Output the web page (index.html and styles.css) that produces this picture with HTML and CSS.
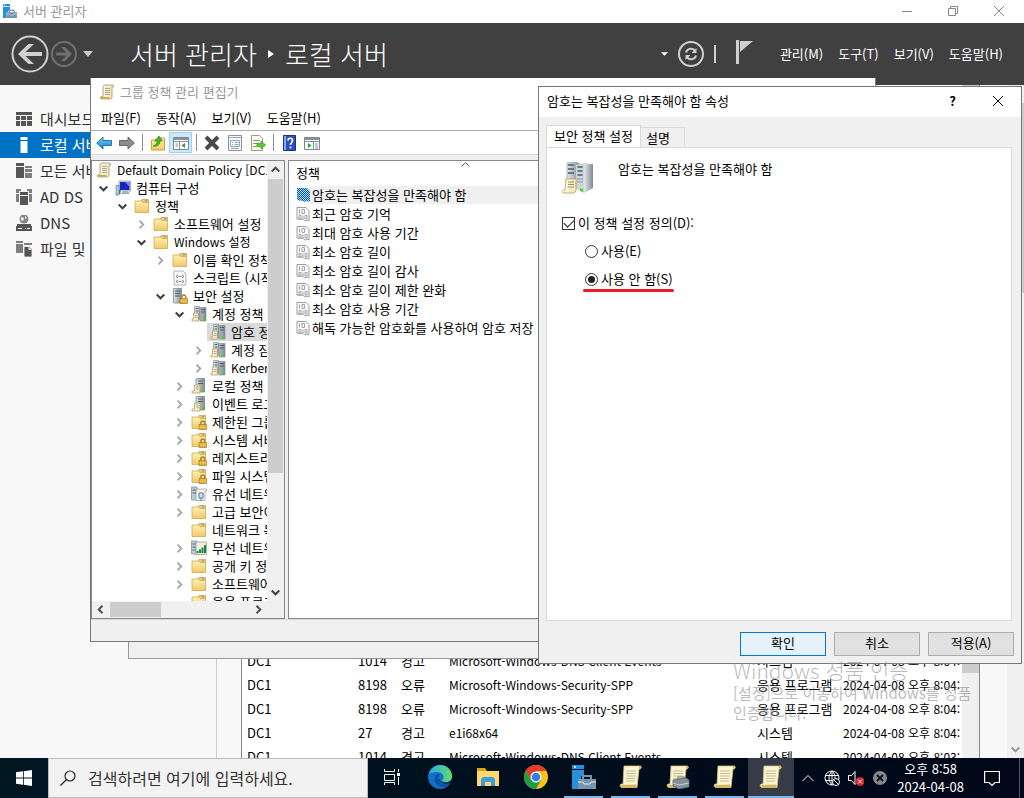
FILE: index.html
```html
<!DOCTYPE html>
<html lang="ko">
  <head>
    <meta charset="UTF-8" />
    <meta name="viewport" content="width=device-width, initial-scale=1.0" />
    <title>서버 관리자</title>
    <link rel="stylesheet" href="styles.css">
  </head>
  <body>
    <!-- shared icons -->
    <svg class="sprite" aria-hidden="true">
      <defs>
        <linearGradient id="paper" x1="0" x2="1">
          <stop offset="0" stop-color="#fffbe6" />
          <stop offset="1" stop-color="#efe0b0" />
        </linearGradient>
        <linearGradient id="metal" x1="0" x2="1">
          <stop offset="0" stop-color="#e2e8ec" />
          <stop offset="1" stop-color="#7f8b93" />
        </linearGradient>
        <linearGradient id="gold" x1="0" x2="0" y1="0" y2="1">
          <stop offset="0" stop-color="#fff0b4" />
          <stop offset="1" stop-color="#f0c968" />
        </linearGradient>
        <linearGradient id="sky" x1="0" x2="0" y1="0" y2="1">
          <stop offset="0" stop-color="#7fd0f7" />
          <stop offset="1" stop-color="#1480c8" />
        </linearGradient>
        <linearGradient id="edge-top" x1="0" x2="1">
          <stop offset="0" stop-color="#2aa7e8" />
          <stop offset="1" stop-color="#62dc6a" />
        </linearGradient>
        <pattern id="dither" width="2" height="2" patternUnits="userSpaceOnUse">
          <rect width="2" height="2" fill="#b5cfe4" />
          <rect width="1" height="1" fill="#005fa8" />
          <rect x="1" y="1" width="1" height="1" fill="#005fa8" />
        </pattern>
      </defs>
      <symbol id="i-manager" viewBox="0 0 24 24">
        <path fill="#2590dc" d="M0 0h12v4H0zM0 5h12v6H9v3H6v10H0z" />
        <path fill="#fff" opacity=".7" d="M2 1h2v2H2z" />
        <path fill="none" stroke="#7396ad" stroke-width="2" d="M11 14v-3h8v3" />
        <path fill="#7396ad" d="M6 14h18v10H6z" />
        <path fill="none" stroke="#dbe8f0" d="M6 17h5l1 2h6l1-2h5" />
      </symbol>
      <symbol id="i-scroll" viewBox="0 0 16 16">
        <path fill="url(#paper)" stroke="#a39a75" stroke-width=".8" d="M5 1h9c1.400 1 1 2.500-1 2.200V13c0 1.600-1 2-2 2H2c-1.500-.5-1-2.500.5-2.500H4V3c0-1 .2-1.600 1-2z" />
        <path fill="none" stroke="#9c977d" stroke-width=".8" d="M6 4.500h5M6 6.500h5M6 8.500h5M6 10.500h5" />
        <path fill="#c9a94f" d="M2 13h8l1 1.800H2z" />
      </symbol>
      <symbol id="i-computer" viewBox="0 0 16 16">
        <path fill="#d5dbe0" stroke="#8c969e" stroke-width=".7" d="M4 1h11.500v10H4z" />
        <path fill="#1826b8" d="M5 2h9.500v8H5z" />
        <path fill="#6d8dea" d="M10 2h4.500v5z" />
        <path fill="#aab2b8" d="M8 11h5l2 3H6z" />
        <path fill="#b4d3e4" stroke="#55788d" stroke-width=".7" d="M1 5.500h3V15H1z" />
        <path fill="#4a6f87" d="M4 10h1.500v4H4z" />
      </symbol>
      <symbol id="i-folder" viewBox="0 0 16 16">
        <path fill="#edcb74" stroke="#c9a243" stroke-width=".8" d="M7 3l1-1.500h6.500V5H8z" />
        <path fill="url(#gold)" stroke="#cfaa50" stroke-width=".8" d="M1 3h7l1 1.500h5.500v10H1z" />
        <path stroke="#4a90d0" d="M11 2.800h2" />
      </symbol>
      <symbol id="i-lock" viewBox="0 0 16 16">
        <path fill="none" stroke="#a9822a" stroke-width="1.400" d="M9.800 11V9.200c0-3 4-3 4 0V11" />
        <path fill="#e0a52b" stroke="#9a7217" stroke-width=".6" d="M8 10.500h7.600v5H8z" />
        <path stroke="#f9da83" stroke-width=".7" d="M8.500 12h6.500M8.500 13.700h6.500" />
      </symbol>
      <symbol id="i-folder-lock" viewBox="0 0 16 16">
        <use href="#i-folder" />
        <use href="#i-lock" />
      </symbol>
      <symbol id="i-tower-lock" viewBox="0 0 16 16">
        <path fill="url(#metal)" stroke="#6c7880" stroke-width=".7" d="M1.500.500h8V15h-8z" />
        <path stroke="#49606c" d="M3 3h5M3 5.500h5M3 8h5" />
        <use href="#i-lock" />
      </symbol>
      <symbol id="i-script" viewBox="0 0 16 16">
        <path fill="#f7f7f7" stroke="#a1a1a1" stroke-width=".8" d="M2 1h9l3 3c-1 3 1 8-.5 11H2c1-4-1-9 0-14z" />
        <path fill="none" stroke="#777" stroke-width=".9" d="M6 5L4 6.500 6 8M10 5l2 1.500L10 8M6.500 6.500h3M6 10l-2 1.500L6 13M10 10l2 1.500-2 1.500M6.500 11.500h3" />
      </symbol>
      <symbol id="i-account" viewBox="0 0 16 16">
        <path fill="url(#metal)" stroke="#77838b" stroke-width=".6" d="M3.500.500h5v13h-5zM9 1.500h6V15H9z" />
        <path stroke="#465e69" stroke-width=".9" d="M4.500 2.500h3M10 3.500h4M10 6h4M4.500 5h3" />
        <path fill="url(#paper)" stroke="#a99260" stroke-width=".7" d="M2.500 7h5v8H1v-2h1.500z" />
        <path stroke="#9b947c" stroke-width=".7" d="M3.500 9.500h3M3.500 11.500h3" />
        <path fill="#45d41c" d="M12 12.500h2.200v2H12z" />
      </symbol>
      <symbol id="i-local" viewBox="0 0 16 16">
        <path fill="url(#metal)" stroke="#69767e" stroke-width=".7" d="M5 1l2-.5h6.500V14H5z" />
        <path stroke="#465e69" d="M7 3h5M7 5.500h5" />
        <path fill="url(#paper)" stroke="#a99260" stroke-width=".7" d="M3.500 7H9v8H1v-2h2.500z" />
        <path stroke="#9b947c" stroke-width=".8" d="M5 9h2.500M5 11h2.500" />
        <path fill="#45d41c" d="M11 11.500h2v2h-2z" />
      </symbol>
      <symbol id="i-wired" viewBox="0 0 16 16">
        <path fill="#bccbd6" stroke="#75899a" stroke-width=".7" d="M.500 1H6v13H.500z" />
        <path stroke="#526c7e" d="M1.500 4H5M1.500 7H5" />
        <path fill="#f6f4e9" stroke="#8f9698" stroke-width=".7" d="M6 3h9.500v2H14v9.500H5V5z" />
        <path fill="#d7e4ef" stroke="#507bac" d="M8 7h4v5H8zM10 12v3" />
      </symbol>
      <symbol id="i-wireless" viewBox="0 0 16 16">
        <path fill="#bccbd6" stroke="#75899a" stroke-width=".7" d="M.500 1H6v13H.500z" />
        <path stroke="#526c7e" d="M1.500 4H5M1.500 7H5M1.500 10H5" />
        <path fill="#f3f0da" stroke="#8f9698" stroke-width=".7" d="M5 2h10.500v12.500H5z" />
        <path fill="none" stroke="#178746" stroke-width="2" d="M6.500 13v-2M9 13V9.500M11.500 13V7.500M14 13V5" />
      </symbol>
      <symbol id="i-policy" viewBox="0 0 14 16">
        <path fill="#fafafa" stroke="#9d9d9d" d="M1 1.500h9l3 3v10.500l-2-1-2 1.200-2-2H1z" />
        <path fill="none" stroke="#9f98a8" stroke-width=".9" d="M3.500 3.500v4M6 3.500h2.500v4H6zM3 9.500h2v3.500H3zM7 9.500V13M9 9.500h2V13H9z" />
      </symbol>
      <symbol id="i-policy-on" viewBox="0 0 14 16">
        <path fill="url(#dither)" d="M1 1h10l3 3v11l-3-1-2 1-2-1-6-1z" />
      </symbol>
      <symbol id="i-open" viewBox="0 0 9 9">
        <path fill="none" stroke="#404040" stroke-width="2" d="M.700 2.500l3.800 3.800 3.800-3.800" />
      </symbol>
      <symbol id="i-closed" viewBox="0 0 9 9">
        <path fill="none" stroke="#a6a6a6" stroke-width="1.800" d="M2.500.700l3.800 3.800-3.800 3.800" />
      </symbol>
      <symbol id="i-arrow" viewBox="0 0 9 9">
        <path fill="none" stroke="#505050" stroke-width="2" d="M.700 6.500l3.800-3.800 3.800 3.800" />
      </symbol>
      <symbol id="i-bigscroll" viewBox="0 0 24 24">
        <path fill="#fdf5cf" stroke="#d0be82" stroke-width=".8" d="M5 1h16.500c1.500 1 1 3-1.500 3l-2 18.500H2.500c-2-1-1.500-3.500 0-3.500H4z" />
        <path fill="#d8b65e" d="M20 1c3 0 2.500 3 0 3.500zM2 20l15-.5 1 3H3z" />
        <path stroke="#b5ad8a" stroke-width=".8" d="M7 6h10M7 8.500h10M7 11h10M7 13.500h9M7 16h9" />
      </symbol>
    </svg>

    <div class="desktop">
      <!-- Server Manager -->
      <main class="manager">
        <div class="manager-title">
          <svg class="app-icon"><use href="#i-manager" /></svg>
          <span>서버 관리자</span>
          <div class="caption">
            <button aria-label="최소화"><svg viewBox="0 0 10 10"><path d="M0 5.500h10" /></svg></button>
            <button aria-label="이전 크기로"><svg viewBox="0 0 10 10"><path d="M.500 2.500h7v7h-7zM2.500 2.500v-2h7v7h-2" /></svg></button>
            <button aria-label="닫기"><svg viewBox="0 0 10 10"><path d="M0 0l10 10M10 0L0 10" /></svg></button>
          </div>
        </div>

        <header class="manager-header">
          <button class="nav-button" aria-label="뒤로">
            <svg class="back" viewBox="0 0 38 38">
              <circle cx="19" cy="19" r="17.500" />
              <path fill="#d0d0d0" d="M7 19L17.500 9H23l-8.500 8H31v4H14.500l8.500 8h-5.500z" />
            </svg>
          </button>
          <button class="nav-button" aria-label="앞으로">
            <svg class="forward" viewBox="0 0 26 26">
              <circle cx="13" cy="13" r="12" />
              <path fill="#707070" d="M21 13l-7 7h-4l5.500-5.500H5v-3h10.500L10 6h4z" />
            </svg>
          </button>
          <button class="nav-button" aria-label="기록"><svg class="history" viewBox="0 0 10 6"><path fill="#c8c8c8" d="M0 0h10L5 6z" /></svg></button>
          <h1>서버 관리자 <svg class="crumb" viewBox="0 0 6 8"><path fill="#fff" d="M0 0l6 4-6 4z" /></svg> 로컬 서버</h1>
          <div class="header-tools">
            <svg class="small-caret" viewBox="0 0 8 4"><path fill="#fff" d="M0 0h8L4 4z" /></svg>
            <button class="nav-button" aria-label="새로 고침">
              <svg class="refresh" viewBox="0 0 26 26">
                <circle cx="13" cy="13" r="12" />
                <path fill="none" stroke="#d0d0d0" stroke-width="2" d="M8 11.500c1-4 6-5 9-2M18 14.500c-1 4-6 5-9 2" />
                <path fill="#d0d0d0" d="M18.500 7v5h-5zM7.500 19v-5h5z" />
              </svg>
            </button>
            <span class="divider"></span>
            <button class="nav-button" aria-label="알림">
              <svg class="flag" viewBox="0 0 18 24"><path fill="#d0d0d0" d="M0 0h3v24H0zM4 1h13L4 12z" /></svg>
            </button>
          </div>
          <nav class="header-menu">
            <button>관리(M)</button>
            <button>도구(T)</button>
            <button>보기(V)</button>
            <button>도움말(H)</button>
          </nav>
        </header>

        <div class="manager-body">
          <nav class="sidebar">
            <a href="#dashboard"><svg viewBox="0 0 16 16"><path d="M0 1h16v3H0zM0 5h4v4H0zM5 5h5v4H5zM11 5h5v4h-5zM0 10h4v5H0zM5 10h5v5H5zM11 10h5v5h-5z" /></svg>대시보드</a>
            <a href="#local" class="active"><svg viewBox="0 0 16 16"><path d="M4.500 0h7v3h-7zM4.500 4h7v12h-7z" /></svg>로컬 서버</a>
            <a href="#all"><svg viewBox="0 0 16 16"><path d="M0 0h8v3H0zM0 4h8v11H0z" /><path opacity=".75" d="M9 3h7v2H9zM9 6h7v3H9zM9 10h7v5H9z" /></svg>모든 서버</a>
            <a href="#adds"><svg viewBox="0 0 16 16"><path d="M4 3h8v3H4zM4 7h8v9H4z" /><path opacity=".75" d="M0 0h5v2H3v2H0zM0 5h3v8H0zM11 0h5v4h-3V2h-2zM13 5h3v8h-3z" /></svg>AD DS</a>
            <a href="#dns"><svg viewBox="0 0 16 16"><circle cx="8" cy="4" r="4.500" opacity=".7" /><path fill="#f8f8f8" d="M5 2l3 1-1 3-2-1zM9 1l2 2-2 1z" /><path d="M1 9h14v2H1zM0 11h16v5H0z" /><path stroke="#f8f8f8" d="M2 13.500h4M9 13.500h1M11 13.500h3" /></svg>DNS</a>
            <a href="#files"><svg viewBox="0 0 16 16"><path opacity=".75" d="M0 0h7v2H0zM0 3h7v9H0zM8 2h8v2H8z" /><path stroke="#f8f8f8" stroke-width=".8" d="M8 5.500h5l3 3V16H8z" /><path fill="#f8f8f8" d="M12.500 6v3h3z" /></svg>파일 및 저장소</a>
          </nav>
          <section class="content">
            <div class="events">
              <div class="events-rows">
                <table>
                  <colgroup>
                    <col class="col-server"><col class="col-id"><col class="col-level"><col><col class="col-log"><col class="col-date">
                  </colgroup>
                  <tbody>
                    <tr><td>DC1</td><td>1014</td><td>경고</td><td class="latin">Microsoft-Windows-DNS Client Events</td><td>시스템</td><td class="latin">2024-04-08 오후 8:04:</td></tr>
                    <tr><td>DC1</td><td>8198</td><td>오류</td><td class="latin">Microsoft-Windows-Security-SPP</td><td>응용 프로그램</td><td class="latin">2024-04-08 오후 8:04:</td></tr>
                    <tr><td>DC1</td><td>8198</td><td>오류</td><td class="latin">Microsoft-Windows-Security-SPP</td><td>응용 프로그램</td><td class="latin">2024-04-08 오후 8:04:</td></tr>
                    <tr><td>DC1</td><td>27</td><td>경고</td><td class="latin">e1i68x64</td><td>시스템</td><td class="latin">2024-04-08 오후 8:04:</td></tr>
                    <tr><td>DC1</td><td>1014</td><td>경고</td><td class="latin">Microsoft-Windows-DNS Client Events</td><td>시스템</td><td class="latin">2024-04-08 오후 8:03:</td></tr>
                  </tbody>
                </table>
              </div>
              <div class="events-scroll"><div class="thumb"></div></div>
            </div>
          </section>
          <div class="page-scroll">
            <div class="thumb"></div>
            <svg><use href="#i-open" /></svg>
          </div>
        </div>
      </main>

      <!-- Group Policy Management, mostly covered -->
      <div class="window behind"></div>

      <!-- Group Policy Management Editor -->
      <section class="window editor">
        <div class="editor-title"><svg class="icon"><use href="#i-scroll" /></svg>그룹 정책 관리 편집기</div>
        <nav class="editor-menu">
          <button>파일(F)</button>
          <button>동작(A)</button>
          <button>보기(V)</button>
          <button>도움말(H)</button>
        </nav>
        <div class="toolbar">
          <button aria-label="뒤로"><svg viewBox="0 0 16 16"><path fill="url(#sky)" stroke="#1d76b5" d="M.700 8L7 2v3.500h8.500v5H7V14z" /></svg></button>
          <button aria-label="앞으로"><svg viewBox="0 0 16 16"><path fill="#8d8d8d" stroke="#666" d="M15.300 8L9 2v3.500H.500v5H9V14z" /></svg></button>
          <span class="sep"></span>
          <button aria-label="위로"><svg viewBox="0 0 16 16"><path fill="url(#gold)" stroke="#c9a243" d="M1.500 5h7l1-2h5v12h-13z" /><path fill="#48b51d" stroke="#2d8410" stroke-width=".6" d="M3 11c3-1 4-3 4-5H4.500L9 1l3.500 5H10c0 4-3 6-7 5z" /></svg></button>
          <button class="on" aria-label="콘솔 트리"><svg viewBox="0 0 16 16"><path fill="#fff" stroke="#7d8790" d="M.500 2.500h15v12H.500z" /><path fill="#8792a0" d="M1 3h14v2H1z" /><path stroke="#8792a0" d="M1 6.500h14M6.500 6v8M2.500 9h2.500M2.500 11h2.500" /><path fill="#2ca61c" d="M12 8v5L8.500 10.500z" /></svg></button>
          <span class="sep"></span>
          <button aria-label="삭제"><svg viewBox="0 0 16 16"><path stroke="#4a4a4a" stroke-width="4" d="M2 2l12 12M14 2L2 14" /></svg></button>
          <button aria-label="속성"><svg viewBox="0 0 16 16"><path fill="#fafafa" stroke="#929292" d="M1.500.500h13v15h-13z" /><path stroke="#a5a5a5" d="M2 2.500h12M4 13.500h8" /><path fill="none" stroke="#8aabc4" d="M3.500 5.500h9v6h-9zM5 7.500h1M7.500 7.500h4M5 9.500h1M7.500 9.500h4" /></svg></button>
          <button aria-label="목록 내보내기"><svg viewBox="0 0 16 16"><path fill="#fffbea" stroke="#a29b84" d="M1.500.500h8l3 3v12h-11z" /><path stroke="#8892a0" d="M3 5.500h7M3 8.500h5M3 11.500h5" /><path fill="#53cb28" stroke="#318a13" stroke-width=".6" d="M7 8.500h4V6l4.700 4-4.700 4v-2.500H7z" /></svg></button>
          <span class="sep"></span>
          <button aria-label="도움말"><svg viewBox="0 0 16 16"><path fill="#2c4fc0" stroke="#16318a" d="M2.500.500h12v15h-12z" /><path fill="#8fa8ec" d="M3 1h2v14H3z" /><path fill="none" stroke="#fff" stroke-width="1.700" d="M7 5.500c0-3 4.500-3 4.500 0 0 2-2 2-2 4.500M9.500 11.500v1.800" /></svg></button>
          <button aria-label="작업 창"><svg viewBox="0 0 16 16"><path fill="#fff" stroke="#7d8790" d="M.500 2.500h15v12H.500z" /><path fill="#8792a0" d="M1 3h14v2H1z" /><path stroke="#8792a0" d="M1 6.500h14M9.500 6v8M11 9h3M11 11h3M11 13h3" /><path fill="#2ca61c" d="M4 8v5l3.500-2.500z" /></svg></button>
        </div>
        <div class="panes">
          <div class="pane tree-pane">
            <div class="tree-main">
              <div class="tree-view">
                <div class="node latin"><svg class="icon"><use href="#i-scroll" /></svg>Default Domain Policy [DC1.</div>
                <ul class="tree">
                  <li>
                    <div class="node"><svg class="twist"><use href="#i-open" /></svg><svg class="icon"><use href="#i-computer" /></svg>컴퓨터 구성</div>
                    <ul>
                      <li>
                        <div class="node"><svg class="twist"><use href="#i-open" /></svg><svg class="icon"><use href="#i-folder" /></svg>정책</div>
                        <ul>
                          <li><div class="node"><svg class="twist"><use href="#i-closed" /></svg><svg class="icon"><use href="#i-folder" /></svg>소프트웨어 설정</div></li>
                          <li>
                            <div class="node latin"><svg class="twist"><use href="#i-open" /></svg><svg class="icon"><use href="#i-folder" /></svg>Windows 설정</div>
                            <ul>
                              <li><div class="node"><svg class="twist"><use href="#i-closed" /></svg><svg class="icon"><use href="#i-folder" /></svg>이름 확인 정책</div></li>
                              <li><div class="node"><span class="twist"></span><svg class="icon"><use href="#i-script" /></svg>스크립트 (시작/종료)</div></li>
                              <li>
                                <div class="node"><svg class="twist"><use href="#i-open" /></svg><svg class="icon"><use href="#i-tower-lock" /></svg>보안 설정</div>
                                <ul>
                                  <li>
                                    <div class="node"><svg class="twist"><use href="#i-open" /></svg><svg class="icon"><use href="#i-account" /></svg>계정 정책</div>
                                    <ul>
                                      <li><div class="node"><span class="twist"></span><span class="selected"><svg class="icon"><use href="#i-account" /></svg>암호 정책</span></div></li>
                                      <li><div class="node"><svg class="twist"><use href="#i-closed" /></svg><svg class="icon"><use href="#i-account" /></svg>계정 잠금 정책</div></li>
                                      <li><div class="node latin"><svg class="twist"><use href="#i-closed" /></svg><svg class="icon"><use href="#i-account" /></svg>Kerberos 정책</div></li>
                                    </ul>
                                  </li>
                                  <li><div class="node"><svg class="twist"><use href="#i-closed" /></svg><svg class="icon"><use href="#i-local" /></svg>로컬 정책</div></li>
                                  <li><div class="node"><svg class="twist"><use href="#i-closed" /></svg><svg class="icon"><use href="#i-local" /></svg>이벤트 로그</div></li>
                                  <li><div class="node"><svg class="twist"><use href="#i-closed" /></svg><svg class="icon"><use href="#i-folder-lock" /></svg>제한된 그룹</div></li>
                                  <li><div class="node"><svg class="twist"><use href="#i-closed" /></svg><svg class="icon"><use href="#i-folder-lock" /></svg>시스템 서비스</div></li>
                                  <li><div class="node"><svg class="twist"><use href="#i-closed" /></svg><svg class="icon"><use href="#i-folder-lock" /></svg>레지스트리</div></li>
                                  <li><div class="node"><svg class="twist"><use href="#i-closed" /></svg><svg class="icon"><use href="#i-folder-lock" /></svg>파일 시스템</div></li>
                                  <li><div class="node"><svg class="twist"><use href="#i-closed" /></svg><svg class="icon"><use href="#i-wired" /></svg>유선 네트워크</div></li>
                                  <li><div class="node"><svg class="twist"><use href="#i-closed" /></svg><svg class="icon"><use href="#i-folder" /></svg>고급 보안이 포함된</div></li>
                                  <li><div class="node"><span class="twist"></span><svg class="icon"><use href="#i-folder" /></svg>네트워크 목록</div></li>
                                  <li><div class="node"><svg class="twist"><use href="#i-closed" /></svg><svg class="icon"><use href="#i-wireless" /></svg>무선 네트워크</div></li>
                                  <li><div class="node"><svg class="twist"><use href="#i-closed" /></svg><svg class="icon"><use href="#i-folder" /></svg>공개 키 정책</div></li>
                                  <li><div class="node"><svg class="twist"><use href="#i-closed" /></svg><svg class="icon"><use href="#i-folder" /></svg>소프트웨어 제한</div></li>
                                  <li><div class="node"><span class="twist"></span><svg class="icon"><use href="#i-folder" /></svg>응용 프로그램</div></li>
                                </ul>
                              </li>
                            </ul>
                          </li>
                        </ul>
                      </li>
                    </ul>
                  </li>
                </ul>
              </div>
              <div class="vscroll">
                <svg><use href="#i-arrow" /></svg>
                <div class="thumb"></div>
                <svg><use href="#i-open" /></svg>
              </div>
            </div>
            <div class="hscroll">
              <svg class="left"><use href="#i-arrow" /></svg>
              <div class="track"><div class="thumb"></div></div>
              <svg class="right"><use href="#i-arrow" /></svg>
            </div>
          </div>
          <div class="pane list-pane">
            <div class="list-head">정책<svg class="sort" viewBox="0 0 9 5"><path fill="none" stroke="#666" d="M.500 4.500l4-4 4 4" /></svg></div>
            <ul class="policies">
              <li class="current"><svg><use href="#i-policy-on" /></svg><span>암호는 복잡성을 만족해야 함</span></li>
              <li><svg><use href="#i-policy" /></svg><span>최근 암호 기억</span></li>
              <li><svg><use href="#i-policy" /></svg><span>최대 암호 사용 기간</span></li>
              <li><svg><use href="#i-policy" /></svg><span>최소 암호 길이</span></li>
              <li><svg><use href="#i-policy" /></svg><span>최소 암호 길이 감사</span></li>
              <li><svg><use href="#i-policy" /></svg><span>최소 암호 길이 제한 완화</span></li>
              <li><svg><use href="#i-policy" /></svg><span>최소 암호 사용 기간</span></li>
              <li><svg><use href="#i-policy" /></svg><span>해독 가능한 암호화를 사용하여 암호 저장</span></li>
            </ul>
          </div>
        </div>
        <div class="statusbar"></div>
      </section>

      <!-- Policy properties dialog -->
      <form class="window dialog">
        <div class="dialog-title">
          <h2>암호는 복잡성을 만족해야 함 속성</h2>
          <button type="button" class="help" aria-label="도움말">?</button>
          <button type="button" aria-label="닫기"><svg viewBox="0 0 10 10"><path stroke="#000" d="M0 0l10 10M10 0L0 10" /></svg></button>
        </div>
        <div class="dialog-body">
          <div class="tabs">
            <button type="button" class="tab active">보안 정책 설정</button>
            <button type="button" class="tab">설명</button>
          </div>
          <div class="tab-panel">
            <div class="policy-name">
              <svg viewBox="0 0 32 32">
                <path fill="url(#metal)" stroke="#8b969c" stroke-width=".6" d="M5 1l9-1 4 2v24H5z" />
                <path fill="#cdd5d9" d="M14 3l8-2 9 1v24l-9 5-8-4z" />
                <path fill="url(#metal)" d="M22 3l9-1v24l-9 5z" />
                <path stroke="#435f6c" stroke-width="1.500" d="M6 3h6M6 7h6M6 11h6M15.500 5h5M15.500 9h5M15.500 13h5" />
                <path stroke="#88999f" d="M15 17h6M15 20h6" />
                <path fill="#4ddc1c" d="M18 26l3 1v3l-3-1z" />
                <path fill="url(#paper)" stroke="#b9a05b" stroke-width=".8" d="M4 17h12l-2 2v10l-2 2H1c-2-2 0-3 2-3z" />
                <path stroke="#9a927b" d="M6 20h6M6 22.500h6M6 25h6" />
              </svg>
              <p>암호는 복잡성을 만족해야 함</p>
            </div>
            <div class="option"><input type="checkbox" id="define" checked><label for="define">이 정책 설정 정의(D):</label></div>
            <div class="option nested"><input type="radio" name="state" id="enabled"><label for="enabled">사용(E)</label></div>
            <div class="option nested marked"><input type="radio" name="state" id="disabled" checked><label for="disabled">사용 안 함(S)</label></div>
          </div>
          <div class="dialog-buttons">
            <button type="button" class="primary">확인</button>
            <button type="button">취소</button>
            <button type="button">적용(A)</button>
          </div>
        </div>
      </form>

      <div class="watermark">
        <p class="watermark-title">Windows 정품 인증</p>
        <p>[설정]으로 이동하여 Windows를 정품<br>인증합니다.</p>
      </div>

      <footer class="taskbar">
        <button class="start" aria-label="시작"><svg viewBox="0 0 16 16"><path fill="#fff" d="M0 2.300L7 1.300V7.600H0zM7.800 1.200L16 0v7.600H7.800zM0 8.400h7v6.300l-7-1zM7.800 8.400H16V16l-8.200-1.200z" /></svg></button>
        <div class="search">
          <svg viewBox="0 0 16 16"><path fill="none" stroke="#222" stroke-width="1.200" d="M6.500 9.500l-6 6" /><circle cx="10" cy="6" r="5" fill="none" stroke="#222" stroke-width="1.200" /></svg>
          <input type="text" aria-label="검색" placeholder="검색하려면 여기에 입력하세요.">
        </div>
        <button class="task idle" aria-label="작업 보기"><svg class="mid" viewBox="0 0 16 16"><path fill="none" stroke="#fff" d="M.500 0v2.500h10V0M.500 5.500h10v6H.500zM.500 16v-2.500h10V16M14.500 0v3M14.500 8v8" /><path fill="#fff" d="M13 4h3v3h-3z" /></svg></button>
        <button class="task idle" aria-label="Edge">
          <svg viewBox="0 0 24 24">
            <circle cx="12" cy="12" r="12" fill="#1270c8" />
            <path fill="url(#edge-top)" d="M1 9C3 2 8 0 12 0c8 0 12 6 12 11 0 4-3 6-6 6-3 0-5-1-3-3 2-3-1-7-6-7-4 0-7 1-8 2z" />
            <path fill="#0c4fa0" d="M9 9c-4 3-3 12 6 13 4 0 6-2 7-4-6 3-11 1-12-3-1-2 0-4 2-5-1-1-2-1-3-1z" />
            <path fill="#001521" d="M12.500 10c-3 2-2 5 1 7 3 1 7 1 10-2 1-1 1 1-1 3-6 2-10 0-12-3 0-2 0-4 2-5z" />
          </svg>
        </button>
        <button class="task idle" aria-label="파일 탐색기"><svg viewBox="0 0 24 24"><path fill="#e0a011" d="M1 3h8l2 3h12v4H1z" /><path fill="#ffd869" d="M1 6h22v15H1z" /><path fill="#3d9be0" d="M5 21v-7l2-2h10l2 2v7h-4v-4H9v4z" /></svg></button>
        <button class="task idle" aria-label="Chrome">
          <svg viewBox="0 0 24 24">
            <circle cx="12" cy="12" r="12" fill="#fbc116" />
            <path fill="#e33b2e" d="M1.600 6A12 12 0 0 1 22.400 6H12v6l-5 3z" />
            <path fill="#229a48" d="M1.600 6A12 12 0 0 0 12 24l5-9-5-3-5 3z" />
            <circle cx="12" cy="12" r="5.500" fill="#fff" /><circle cx="12" cy="12" r="4.300" fill="#2f7de9" />
          </svg>
        </button>
        <button class="task" aria-label="서버 관리자"><svg><use href="#i-manager" /></svg></button>
        <button class="task" aria-label="그룹 정책 관리"><svg><use href="#i-bigscroll" /></svg></button>
        <button class="task" aria-label="정책 도구"><svg viewBox="0 0 24 24"><use href="#i-bigscroll" /><path fill="none" stroke="#919a9e" stroke-width="1.500" d="M12 15v-3h6v3" /><path fill="#84919a" stroke="#59656e" stroke-width=".8" d="M7 15l13-2 3 2v7l-10 2-6-3z" /><path fill="none" stroke="#c6d0d5" d="M7 18l6 2 10-2" /></svg></button>
        <button class="task" aria-label="정책 편집기"><svg><use href="#i-bigscroll" /></svg></button>
        <button class="task focused" aria-label="정책 관리 편집기"><svg><use href="#i-bigscroll" /></svg></button>
        <div class="tray">
          <svg viewBox="0 0 16 16"><path d="M2.500 11L8 5.500l5.500 5.500" /></svg>
          <svg viewBox="0 0 16 16"><circle cx="8" cy="8" r="7" /><path d="M8 1c-4 4-4 10 0 14M8 1c3 3 3 5 3 7M1.500 5.500h13M1.500 10.500H8M8 1v14" /><circle cx="12" cy="12" r="3.500" fill="#000a18" /><path d="M9.500 9.500l5 5" /></svg>
          <svg viewBox="0 0 16 16"><path d="M.500 5.500h3l3.500-4v13l-3.500-4h-3z" /><circle cx="12" cy="11.500" r="4.500" fill="#d9232e" stroke="none" /><path d="M10 9.500l4 4M14 9.500l-4 4" /></svg>
          <svg viewBox="0 0 16 16"><circle cx="8" cy="8" r="7" fill="#85888e" stroke="none" /><path class="dark" d="M5 5l6 6M11 5l-6 6" /></svg>
        </div>
        <div class="clock"><span>오후 8:58</span><span>2024-04-08</span></div>
        <button class="notices" aria-label="알림 센터"><svg viewBox="0 0 16 16"><path fill="none" stroke="#fff" stroke-width="1.200" d="M.600 1.500h14.800v11H11L8 15.500l-3-3H.600z" /></svg></button>
      </footer>
    </div>
  </body>
</html>
```

FILE: styles.css
```css
* {
  box-sizing: border-box;
}

body {
  margin: 0;
  font-family: "Noto Sans CJK KR", "Noto Sans", sans-serif;
  font-size: 13px;
  line-height: 18px;
  color: #000;
}

h1,
h2,
p,
ul {
  margin: 0;
  padding: 0;
  font-weight: normal;
}

ul {
  list-style: none;
}

button,
input {
  margin: 0;
  padding: 0;
  border: none;
  background: none;
  font: inherit;
  color: inherit;
}

svg {
  display: block;
  flex: none;
}

.sprite {
  position: absolute;
  width: 0;
  height: 0;
}

.desktop {
  position: relative;
  display: flex;
  flex-direction: column;
  height: 100vh;
  overflow: hidden;
  white-space: nowrap;
}

.icon {
  width: 16px;
  height: 16px;
}

/* latin letters run wide next to hangul */
.latin {
  font-size: 12px;
}

/* Server Manager */
.manager {
  display: flex;
  flex-direction: column;
  flex: 1;
  min-height: 0;
  background: #f8f8f8;
}

.manager-title {
  display: flex;
  align-items: center;
  height: 23px;
  padding: 0 2px 2px 3px;
  gap: 6px;
  background: #fff;
  color: #999;
}

.app-icon {
  width: 14px;
  height: 14px;
}

.caption {
  display: flex;
  margin-left: auto;
}

.caption button {
  display: flex;
  justify-content: center;
  width: 46px;
}

.caption svg {
  width: 10px;
  height: 10px;
  fill: none;
  stroke: #888;
}

.manager-header {
  display: flex;
  align-items: center;
  height: 62px;
  padding: 0 21px 0 11px;
  background: #404040;
  color: #fff;
}

.nav-button circle {
  fill: none;
  stroke: #d0d0d0;
  stroke-width: 2;
}

.back {
  width: 38px;
  height: 38px;
}

.forward,
.refresh {
  width: 26px;
  height: 26px;
}

.forward {
  margin-left: 2px;
}

.nav-button .forward circle {
  stroke: #707070;
}

.history {
  width: 10px;
  height: 6px;
  margin-left: 6px;
}

.manager-header h1 {
  display: flex;
  align-items: center;
  gap: 11px;
  margin-left: 37px;
  font-size: 26px;
  font-weight: 300;
  line-height: 36px;
}

.crumb {
  width: 6px;
  height: 8px;
}

.header-tools {
  display: flex;
  align-items: center;
  gap: 10px;
  margin-left: auto;
}

.small-caret {
  width: 7px;
  height: 4px;
}

.divider {
  width: 2px;
  height: 18px;
  background: #d0d0d0;
}

.flag {
  width: 18px;
  height: 24px;
  margin: 0 16px 4px 10px;
}

.header-menu {
  display: flex;
  gap: 15px;
  margin-left: 10px;
}

.manager-body {
  display: flex;
  flex: 1;
  min-height: 0;
}

.sidebar {
  flex: none;
  width: 217px;
  padding-top: 21px;
  border-right: 1px solid #ccc;
}

.sidebar a {
  display: flex;
  align-items: center;
  gap: 8px;
  height: 26px;
  padding-left: 16px;
  font-size: 15px;
  color: #333;
  text-decoration: none;
}

.sidebar svg {
  width: 16px;
  height: 16px;
  fill: #555;
}

.sidebar .active {
  background: #0072c6;
  color: #fff;
}

.sidebar .active svg {
  fill: #fff;
}

.content {
  display: flex;
  flex: 1;
  min-width: 0;
  padding: 0 27px 0 24px;
}

.events {
  display: flex;
  flex: 1;
  min-width: 0;
  background: #fff;
  border: 1px solid #888;
  border-width: 0 1px;
}

.events-rows {
  display: flex;
  flex: 1;
  flex-direction: column;
  justify-content: flex-end;
  min-width: 0;
  overflow: hidden;
}

.events table {
  width: 100%;
  margin-bottom: -11px;
  border-collapse: collapse;
  table-layout: fixed;
}

.events td {
  height: 24px;
  padding: 0 0 0 5px;
  overflow: hidden;
}

.col-server {
  width: 111px;
}

.col-id {
  width: 43px;
}

.col-level {
  width: 48px;
}

.col-log {
  width: 86px;
}

.col-date {
  width: 124px;
}

.thumb {
  background: #cdcdcd;
}

.events-scroll,
.page-scroll {
  flex: none;
  width: 17px;
  background: #f0f0f0;
}

.events-scroll .thumb {
  height: 588px;
}

.page-scroll {
  display: flex;
  flex-direction: column;
  align-items: center;
  padding: 18px 0 4px;
}

.page-scroll .thumb {
  width: 17px;
  height: 190px;
}

.page-scroll svg {
  width: 9px;
  height: 9px;
  margin-top: auto;
  opacity: 0.5;
}

/* Floating windows */
.window {
  position: absolute;
  background: #f0f0f0;
  border: 1px solid #777;
}

.behind {
  top: 110px;
  left: 128px;
  width: 780px;
  height: 549px;
  border-color: #999;
}

.editor {
  display: flex;
  flex-direction: column;
  top: 78px;
  left: 90px;
  width: 786px;
  height: 564px;
  border-top: none;
}

.editor-title {
  display: flex;
  align-items: center;
  gap: 5px;
  height: 28px;
  padding-left: 8px;
  background: #fff;
  color: #999;
}

.editor-menu {
  display: flex;
  gap: 15px;
  height: 25px;
  padding: 0 10px 1px;
  background: #fff;
  border-bottom: 1px solid #b0b0b0;
}

.toolbar {
  display: flex;
  align-items: center;
  height: 24px;
  padding-left: 1px;
  background: #fff;
  border-bottom: 1px solid #d8d8d8;
}

.toolbar button {
  display: flex;
  align-items: center;
  justify-content: center;
  width: 23px;
  height: 21px;
}

.toolbar svg {
  width: 16px;
  height: 16px;
}

.toolbar .on {
  background: #cce8ff;
  border: 1px solid #99d1ff;
}

.sep {
  width: 1px;
  height: 17px;
  margin: 0 3px 0 4px;
  background: #8c8c8c;
}

.panes {
  display: flex;
  flex: 1;
  gap: 3px;
  min-height: 0;
  padding-top: 5px;
}

.pane {
  background: #fff;
  border: 1px solid #828790;
}

.tree-pane {
  display: flex;
  flex: none;
  flex-direction: column;
  width: 194px;
}

.tree-main {
  display: flex;
  flex: 1;
  min-height: 0;
}

.tree-view {
  flex: 1;
  min-width: 0;
  padding-left: 4px;
  overflow: hidden;
}

.tree ul ul,
.tree > li > ul {
  padding-left: 19px;
}

.node,
.selected {
  display: flex;
  align-items: center;
  height: 18px;
}

.node .icon {
  margin-right: 5px;
}

.twist {
  flex: none;
  width: 9px;
  height: 9px;
  margin: 1px 7px 0 3px;
}

.selected {
  flex: 1;
  margin-left: -3px;
  padding-left: 3px;
  background: #d9d9d9;
}

.vscroll {
  display: flex;
  flex-direction: column;
  align-items: center;
  flex: none;
  width: 17px;
  padding: 4px 0;
  background: #f0f0f0;
}

.vscroll svg,
.hscroll svg {
  width: 9px;
  height: 9px;
}

.vscroll .thumb {
  width: 15px;
  height: 294px;
  margin: 5px 0 auto;
}

.hscroll {
  display: flex;
  align-items: center;
  flex: none;
  height: 17px;
  padding: 0 21px 0 4px;
  background: #f0f0f0;
}

.left {
  transform: rotate(-90deg);
}

.right {
  transform: rotate(90deg);
}

.track {
  flex: 1;
  margin: 0 5px;
}

.track .thumb {
  width: 51px;
  height: 15px;
}

.list-pane {
  flex: 1;
}

.list-head {
  position: relative;
  height: 24px;
  padding: 3px 7px;
}

.sort {
  position: absolute;
  top: 1px;
  left: 172px;
  width: 9px;
  height: 5px;
}

.policies li {
  display: flex;
  align-items: center;
  height: 19px;
  padding-left: 7px;
}

.policies svg {
  width: 14px;
  height: 16px;
}

.policies span {
  flex: 1;
  padding-left: 2px;
}

.policies .current span {
  background: #f0f0f0;
}

.statusbar {
  flex: none;
  height: 22px;
  border-top: 1px solid #d8d8d8;
}

/* Properties dialog */
.dialog {
  display: flex;
  flex-direction: column;
  top: 86px;
  left: 538px;
  width: 484px;
  height: 578px;
}

.dialog-title {
  display: flex;
  align-items: center;
  height: 30px;
  padding: 0 1px 2px 8px;
  background: #fff;
}

.dialog-title h2 {
  flex: 1;
  font-size: 13px;
}

.dialog-title button {
  display: flex;
  justify-content: center;
  width: 45px;
}

.dialog-title .help {
  font-weight: bold;
}

.dialog-title svg {
  width: 10px;
  height: 10px;
}

.dialog-body {
  display: flex;
  flex: 1;
  flex-direction: column;
  padding: 8px 7px 7px;
}

.tabs {
  display: flex;
  align-items: flex-end;
}

.tab {
  height: 20px;
  padding: 0 14px 0 5px;
  border: 1px solid #dadada;
  border-width: 1px 1px 0 0;
}

.tab.active {
  height: 23px;
  margin-bottom: -1px;
  padding: 0 7px 3px;
  border-width: 1px 1px 0;
  background: #fff;
}

.tab-panel {
  flex: 1;
  margin-right: 2px;
  padding: 14px 15px;
  background: #fff;
  border: 1px solid #dadada;
}

.policy-name {
  display: flex;
  gap: 24px;
  margin-bottom: 19px;
}

.policy-name svg {
  width: 32px;
  height: 32px;
}

.policy-name p {
  margin-top: -2px;
}

.option {
  display: flex;
  align-items: center;
  width: max-content;
  margin-bottom: 8px;
  height: 20px;
  gap: 3px;
}

.nested {
  margin-left: 23px;
}

.option input {
  display: flex;
  align-items: center;
  justify-content: center;
  width: 13px;
  height: 13px;
  border: 1px solid #333;
  background: #fff;
  appearance: none;
}

.option input[type="radio"] {
  border-radius: 50%;
}

.option input[type="radio"]:checked::before {
  content: "";
  width: 7px;
  height: 7px;
  border-radius: 50%;
  background: #222;
}

.option input[type="checkbox"]:checked::before {
  content: "";
  width: 9px;
  height: 5px;
  margin-bottom: 3px;
  border: solid #222;
  border-width: 0 0 1px 1px;
  transform: rotate(-45deg);
}

/* red line under the chosen option */
.marked {
  position: relative;
}

.marked::after {
  content: "";
  position: absolute;
  right: -1px;
  bottom: -3px;
  left: -2px;
  height: 3px;
  border-radius: 2px;
  background: #ed1c24;
}

.dialog-buttons {
  display: flex;
  justify-content: flex-end;
  gap: 8px;
  padding-top: 11px;
}

.dialog-buttons button {
  width: 86px;
  height: 24px;
  padding-bottom: 2px;
  background: #e1e1e1;
  border: 1px solid #adadad;
}

.dialog-buttons .primary {
  background: #e5f1fb;
  border-color: #0078d7;
}

.watermark {
  position: absolute;
  top: 657px;
  left: 733px;
  font-size: 15px;
  line-height: 20px;
  color: rgba(140, 140, 140, 0.6);
  pointer-events: none;
}

.watermark-title {
  font-size: 21px;
  font-weight: 300;
  line-height: 26px;
}

/* Taskbar */
.taskbar {
  display: flex;
  align-items: center;
  flex: none;
  height: 40px;
  background: linear-gradient(90deg, #001722, #000718);
  color: #fff;
}

.taskbar button {
  display: flex;
  align-items: center;
  justify-content: center;
  flex: none;
  height: 40px;
}

.start {
  width: 48px;
}

.start svg,
.search svg,
.task .mid,
.tray svg {
  width: 16px;
  height: 16px;
}

.search {
  display: flex;
  align-items: center;
  flex: 0 1 320px;
  gap: 12px;
  height: 40px;
  padding-left: 11px;
  background: #f2f2f2;
  border: 1px solid #bbb;
}

.search input {
  flex: 1;
  min-width: 0;
  font-size: 16px;
  outline: none;
}

.search input::placeholder {
  color: #333;
}

.task {
  width: 39px;
  margin: 0 4px;
  border-bottom: 2px solid #76b9ed;
}

.task.idle {
  width: 40px;
  border-color: transparent;
}

.task.focused {
  width: 46px;
  margin: 0;
  background: #363b47;
}

.task svg {
  width: 24px;
  height: 24px;
}

.tray {
  display: flex;
  gap: 8px;
  margin-left: auto;
  fill: none;
  stroke: #fff;
}

.tray .dark {
  stroke: #111;
  stroke-width: 2;
}

.clock {
  display: flex;
  flex-direction: column;
  align-items: center;
  margin-left: 9px;
}

.notices {
  width: 56px;
  margin-right: 4px;
  border-right: 1px solid #555;
}

.notices svg {
  width: 16px;
  height: 16px;
}
```
